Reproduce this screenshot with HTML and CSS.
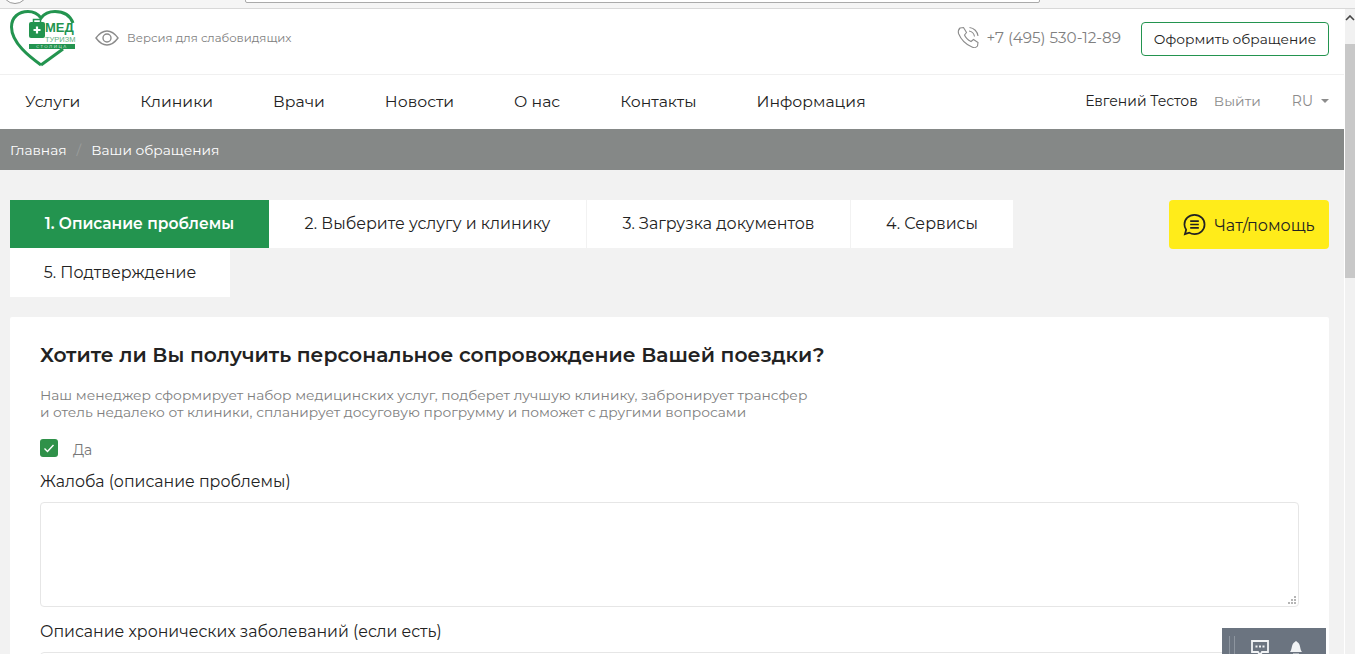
FILE: index.html
```html
<!DOCTYPE html>
<html lang="ru">
<head>
<meta charset="utf-8">
<title>Ваши обращения</title>
<link rel="stylesheet" href="styles.css">
</head>
<body>
<div class="chrome"><span class="chrome-circle"></span><span class="chrome-field"></span></div>
<div class="viewport">
  <div class="page">
    <header class="topbar">
      <div class="logo">
        <svg class="logo-heart" width="66" height="57" viewBox="0 0 66 57"><path d="M31 55 C20 47 1.500 33 1.500 17 C1.500 7 9 1.500 18 1.500 C24 1.500 28 4 31 8 C34 4 38 1.500 45 1.500 C53 1.500 60 5 63 13" fill="none" stroke="#23944f" stroke-width="3"/><path d="M31 55 L53 39" fill="none" stroke="#23944f" stroke-width="3"/><rect x="19" y="12" width="16" height="16" rx="2" fill="#23944f"/><path d="M23.500 12 V9.500 H30.500 V12" fill="none" stroke="#23944f" stroke-width="1.500"/><path d="M23.500 20 H30.500 M27 16.500 V23.500" stroke="#fff" stroke-width="2.200"/></svg>
        <div class="logo-text"><span class="logo-med">МЕД</span><span class="logo-tur">ТУРИЗМ</span></div>
        <span class="logo-cap">СТОЛИЦА</span>
      </div>
      <a class="low-vision">
        <svg width="24" height="16" viewBox="0 0 24 16"><path d="M1 8 C5 2.500 9 1 12 1 C15 1 19 2.500 23 8 C19 13.500 15 15 12 15 C9 15 5 13.500 1 8 Z" fill="none" stroke="#8b8b8b" stroke-width="1.400"/><circle cx="12" cy="8" r="4" fill="none" stroke="#8b8b8b" stroke-width="1.400"/></svg>
        <span>Версия для слабовидящих</span>
      </a>
      <div class="spacer"></div>
      <svg class="phone-icon" width="23" height="23" viewBox="0 0 23 23"><path d="M3 2 L6.500 1.500 L9.500 6.500 L7.500 9 C8.500 11.500 11 14 14 15.500 L16.500 13.500 L21 16.500 L20.500 20 C19.500 21.500 17 22 15 21 C9 18.500 4 13.500 1.500 7.500 C1 5.500 1.500 3.500 3 2 Z" fill="none" stroke="#8b8b8b" stroke-width="1.100"/><path d="M12 5 C15 5.500 17 7.500 17.500 10.500 M12.500 1.500 C17 2 20.500 5.500 21 10" fill="none" stroke="#8b8b8b" stroke-width="1.100"/></svg>
      <span class="phone">+7 (495) 530-12-89</span>
      <a class="cta">Оформить обращение</a>
    </header>
    <nav class="mainnav">
      <a>Услуги</a><a>Клиники</a><a>Врачи</a><a>Новости</a><a>О нас</a><a>Контакты</a><a>Информация</a>
      <div class="spacer"></div>
      <span class="user">Евгений Тестов</span>
      <span class="logout">Выйти</span>
      <span class="lang">RU<i class="caret"></i></span>
    </nav>
    <div class="crumbs"><span>Главная</span><span class="sep">/</span><span>Ваши обращения</span></div>
    <main class="content">
      <div class="steps-row">
        <div class="steps">
          <a class="step active step-1">1. Описание проблемы</a>
          <a class="step step-2">2. Выберите услугу и клинику</a>
          <a class="step step-3">3. Загрузка документов</a>
          <a class="step step-4">4. Сервисы</a>
          <a class="step step-5">5. Подтверждение</a>
        </div>
        <a class="chat">
          <svg width="23" height="23" viewBox="0 0 24 24"><path d="M12 2 C18 2 22.500 6.500 22.500 12 C22.500 17.500 18 22 12 22 C10 22 8 21.500 6.500 20.500 L2 22 L3.300 17.500 C2 15.500 1.500 14 1.500 12 C1.500 6.500 6 2 12 2 Z" fill="none" stroke="#222" stroke-width="1.800"/><path d="M7.500 8.500 H16.500 M7.500 12 H16.500 M7.500 15.500 H16.500" stroke="#222" stroke-width="1.800"/></svg>
          <span>Чат/помощь</span>
        </a>
      </div>
      <section class="card">
        <h2>Хотите ли Вы получить персональное сопровождение Вашей поездки?</h2>
        <p class="lead">Наш менеджер сформирует набор медицинских услуг, подберет лучшую клинику, забронирует трансфер<br>и отель недалеко от клиники, спланирует досуговую прогрумму и поможет с другими вопросами</p>
        <div class="check-row">
          <span class="check"><svg width="14" height="12" viewBox="0 0 14 12"><path d="M2.500 6.500 L5.500 9.500 L11.500 3" fill="none" stroke="#fff" stroke-width="1.400"/></svg></span>
          <span class="check-label">Да</span>
        </div>
        <label class="field-label">Жалоба (описание проблемы)</label>
        <div class="textarea">
          <svg class="grip" width="9" height="9" viewBox="0 0 9 9"><g fill="#b5b5b5"><rect x="6" y="0" width="2" height="2"/><rect x="3" y="3" width="2" height="2"/><rect x="6" y="3" width="2" height="2"/><rect x="0" y="6" width="2" height="2"/><rect x="3" y="6" width="2" height="2"/><rect x="6" y="6" width="2" height="2"/></g></svg>
        </div>
        <label class="field-label second">Описание хронических заболеваний (если есть)</label>
        <div class="textarea"></div>
      </section>
    </main>
  </div>
  <div class="scrollbar"><svg class="arrow" width="10" height="6" viewBox="0 0 10 6"><path d="M1 5 L5 1 L9 5" fill="none" stroke="#444" stroke-width="1.600"/></svg><span class="thumb"></span></div>
  <div class="dock">
    <span class="dock-lines"></span>
    <svg class="dock-chat" width="18" height="18" viewBox="0 0 18 18"><path d="M1 1 H17 V12 H11 L9 15 L7 12 H1 Z" fill="none" stroke="#f1f3f5" stroke-width="1.800"/><path d="M4.500 6.500 H6.500 M8 6.500 H10 M11.500 6.500 H13.500" stroke="#f1f3f5" stroke-width="2"/></svg>
    <svg class="dock-bell" width="14" height="16" viewBox="0 0 14 16"><path d="M1 12 C3 10 2.500 5 4.500 3 C5.500 2 6 2 7 1 C8 2 8.500 2 9.500 3 C11.500 5 11 10 13 12 Z" fill="#f1f3f5"/><rect x="4" y="13.500" width="6" height="1.500" fill="#f1f3f5"/></svg>
  </div>
</div>
</body>
</html>
```
FILE: styles.css
```css
* { box-sizing: border-box; }
html, body { margin: 0; height: 100%; overflow: hidden; }
body { font-family: "Montserrat", "Inter", "Open Sans", "Liberation Sans", sans-serif; color: #222; background: #fff; }
.chrome { height: 9px; background: #f5f5f5; border-bottom: 1px solid #d8d8d8; position: relative; overflow: hidden; }
.chrome-circle { position: absolute; left: 2px; top: -22px; width: 26px; height: 26px; border: 1px solid #999; border-radius: 50%; background: #fff; }
.chrome-field { position: absolute; left: 245px; top: -10px; width: 795px; height: 13px; border: 1px solid #aaa; border-radius: 2px; background: #fff; }
.viewport { display: flex; height: 645px; position: relative; overflow: hidden; }
.page { flex: 1; min-width: 0; background: #f2f2f2; border-right: 1px solid #fff; }
.topbar { height: 66px; background: #fff; border-bottom: 1px solid #f0f0f0; display: flex; align-items: center; padding: 0 15px 8px 10px; }
.logo { position: relative; flex: none; align-self: flex-start; width: 66px; height: 57px; margin-top: 1px; }
.logo-heart { display: block; }
.logo-text { position: absolute; left: 35px; top: 11px; width: 31px; display: flex; flex-direction: column; font-family: "Liberation Sans", sans-serif; }
.logo-med { font-size: 13px; font-weight: 700; color: #23944f; line-height: 14px; }
.logo-tur { font-size: 7.500px; color: #5fae80; line-height: 8px; white-space: nowrap; margin-top: 0.500px; }
.logo-cap { position: absolute; left: 19px; top: 34px; width: 46px; height: 5px; font-size: 4px; line-height: 5px; color: #fff; background: #23944f; letter-spacing: 1.500px; text-align: center; overflow: hidden; }
.low-vision { display: flex; align-items: center; gap: 8px; margin-left: 19px; color: #808080; font-size: 11.700px; }
.spacer { flex: 1; }
.phone-icon { margin-right: 7px; }
.phone { color: #808080; font-size: 15.200px; margin-right: 20px; }
.cta { height: 34px; width: 188px; margin-top: 2px; display: flex; align-items: center; justify-content: center; border: 1px solid #23944f; border-radius: 4px; font-size: 13.750px; color: #222; }
.mainnav { height: 54px; background: #fff; display: flex; align-items: center; padding: 0 15px 2px 25px; font-size: 15.700px; }
.mainnav > a { margin-right: 60px; }
.user { font-size: 14px; margin-right: 16px; }
.logout { font-size: 13.900px; color: #8c8c8c; margin-right: 31px; }
.lang { font-size: 14px; color: #8c8c8c; display: flex; align-items: center; }
.caret { display: block; width: 0; height: 0; margin-left: 8px; border: 4px solid transparent; border-top-color: #8c8c8c; border-bottom: 0; }
.crumbs { height: 41px; background: #858887; color: #fff; display: flex; align-items: center; padding: 0 10px; font-size: 13.800px; }
.sep { color: #9b9e9d; margin: 0 10px; }
.content { padding: 30px 15px 0 10px; }
.steps-row { display: flex; align-items: flex-start; justify-content: space-between; }
.steps { display: flex; flex-wrap: wrap; width: 1010px; }
.step { height: 48px; background: #fff; display: flex; align-items: center; justify-content: center; font-size: 15.900px; color: #222; border-right: 1px solid #f2f2f2; padding-bottom: 2px; }
.step-1 { width: 259px; }
.step-2 { width: 318px; }
.step-3 { width: 264px; }
.step-4 { width: 163px; }
.step-5 { width: 220px; height: 49px; border-right: 0; padding-bottom: 0; }
.step.active { background: #23944f; color: #fff; font-weight: 600; font-size: 15.500px; border-right: 0; }
.chat { width: 160px; height: 49px; background: #ffec1a; border-radius: 4px; display: flex; align-items: center; justify-content: center; gap: 8px; font-size: 16px; color: #222; }
.chat span { padding-top: 1px; }
.card { background: #fff; margin-top: 20px; padding: 24px 30px 0; border-radius: 2px; }
.card h2 { margin: 0; font-size: 20.300px; font-weight: 600; line-height: 28px; color: #222; }
.lead { margin: 17px 0 0; font-size: 13.800px; line-height: 17px; color: #808080; position: relative; top: 1px; }
.check-row { display: flex; align-items: center; margin-top: 18px; height: 20px; }
.check { width: 18px; height: 18px; background: #2f9149; border-radius: 3px; display: flex; align-items: center; justify-content: center; }
.check-label { margin-left: 15px; font-size: 14px; color: #777; padding-top: 4px; }
.field-label { display: block; font-size: 15.800px; line-height: 20px; margin-top: 14px; color: #222; }
.field-label.second { margin-top: 15px; }
.textarea { height: 105px; margin-top: 10px; border: 1px solid #e6e6e6; border-radius: 4px; position: relative; background: #fff; }
.grip { position: absolute; right: 1px; bottom: 1px; }
.scrollbar { width: 10px; background: #f1f1f1; position: relative; }
.arrow { position: absolute; left: 0; top: 6px; }
.thumb { position: absolute; left: 0; right: 0; top: 35px; height: 234px; background: #c8c8c8; }
.dock { position: absolute; left: 1222px; top: 619px; width: 104px; height: 30px; background: #6b7480; }
.dock-lines { position: absolute; left: 7px; top: 8px; width: 6px; height: 22px; border-left: 1px solid #8d959f; border-right: 1px solid #8d959f; }
.dock-chat { position: absolute; left: 29px; top: 12px; }
.dock-bell { position: absolute; left: 67px; top: 12px; }
```
